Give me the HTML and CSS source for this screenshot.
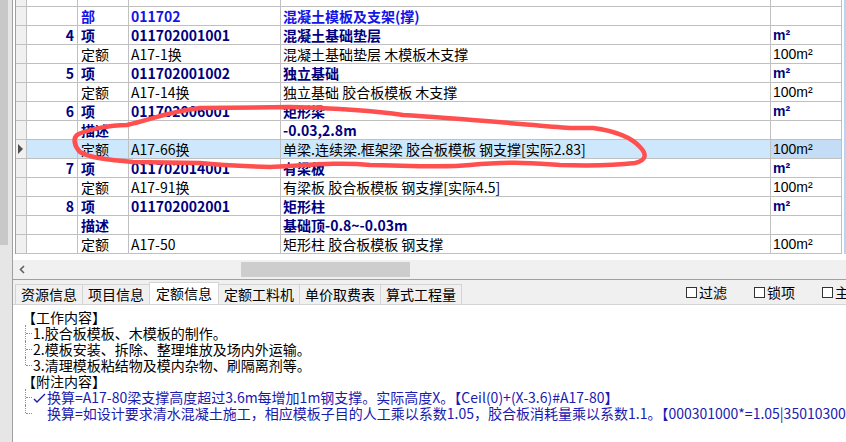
FILE: index.html
```html
<!DOCTYPE html>
<html lang="zh-CN">
	<head>
		<meta charset="UTF-8">
		<title>定额信息</title>
		<link rel="stylesheet" href="styles.css">
	</head>
	<body>
		<div class="app">
			<div class="side"><div class="thumb"></div></div>
			<div class="main">
				<div class="sheet">
					<div class="table">
						<div class="row cut"><div class="hd"></div><div></div><div></div><div></div><div></div><div></div></div>
						<div class="row bu"><div class="hd"></div><div class="num"></div><div>部</div><div>011702</div><div>混凝土模板及支架(撑)</div><div></div></div>
						<div class="row xm"><div class="hd"></div><div class="num">4</div><div>项</div><div>011702001001</div><div>混凝土基础垫层</div><div class="unit">m²</div></div>
						<div class="row de"><div class="hd"></div><div class="num"></div><div>定额</div><div>A17-1换</div><div>混凝土基础垫层 木模板木支撑</div><div class="unit">100m²</div></div>
						<div class="row xm"><div class="hd"></div><div class="num">5</div><div>项</div><div>011702001002</div><div>独立基础</div><div class="unit">m²</div></div>
						<div class="row de"><div class="hd"></div><div class="num"></div><div>定额</div><div>A17-14换</div><div>独立基础 胶合板模板 木支撑</div><div class="unit">100m²</div></div>
						<div class="row xm"><div class="hd"></div><div class="num">6</div><div>项</div><div>011702006001</div><div>矩形梁</div><div class="unit">m²</div></div>
						<div class="row xm"><div class="hd"></div><div class="num"></div><div>描述</div><div></div><div>-0.03,2.8m</div><div></div></div>
						<div class="row de sel"><div class="hd"><span class="arrow"></span></div><div class="num"></div><div>定额</div><div>A17-66换</div><div>单梁.连续梁.框架梁 胶合板模板 钢支撑[实际2.83]</div><div class="unit focus">100m²</div></div>
						<div class="row xm"><div class="hd"></div><div class="num">7</div><div>项</div><div>011702014001</div><div>有梁板</div><div class="unit">m²</div></div>
						<div class="row de"><div class="hd"></div><div class="num"></div><div>定额</div><div>A17-91换</div><div>有梁板 胶合板模板 钢支撑[实际4.5]</div><div class="unit">100m²</div></div>
						<div class="row xm"><div class="hd"></div><div class="num">8</div><div>项</div><div>011702002001</div><div>矩形柱</div><div class="unit">m²</div></div>
						<div class="row xm"><div class="hd"></div><div class="num"></div><div>描述</div><div></div><div>基础顶-0.8~-0.03m</div><div></div></div>
						<div class="row de"><div class="hd"></div><div class="num"></div><div>定额</div><div>A17-50</div><div>矩形柱 胶合板模板 钢支撑</div><div class="unit">100m²</div></div>
					</div>
					<div class="edge"></div>
				</div>
				<div class="hscroll">
					<svg class="left" width="17" height="17" viewBox="0 0 17 17"><path d="M9 5 L5.5 8.5 L9 12" fill="none" stroke="#606060" stroke-width="1.6"/></svg>
					<div class="hthumb"></div>
				</div>
				<div class="tabbar">
					<div class="tab">资源信息</div>
					<div class="tab">项目信息</div>
					<div class="tab on">定额信息</div>
					<div class="tab">定额工料机</div>
					<div class="tab">单价取费表</div>
					<div class="tab">算式工程量</div>
					<div class="checks">
						<label class="check"><span class="box"></span>过滤</label>
						<label class="check"><span class="box"></span>锁项</label>
						<label class="check"><span class="box"></span>主材</label>
					</div>
				</div>
				<div class="info">
					<p class="head">【工作内容】</p>
					<ul class="tree">
						<li>1.胶合板模板、木模板的制作。</li>
						<li>2.模板安装、拆除、整理堆放及场内外运输。</li>
						<li>3.清理模板粘结物及模内杂物、刷隔离剂等。</li>
					</ul>
					<p class="head">【附注内容】</p>
					<ul class="tree note">
						<li><svg class="tick" width="14" height="12" viewBox="0 0 14 12"><path d="M1 7 L4 10 L12 2" fill="none" stroke="#1a1ab0" stroke-width="1.4"/></svg>换算=A17-80梁支撑高度超过3.6m每增加1m钢支撑。实际高度X。【Ceil(0)+(X-3.6)#A17-80】</li>
						<li><span class="notick"></span>换算=如设计要求清水混凝土施工，相应模板子目的人工乘以系数1.05，胶合板消耗量乘以系数1.1。【000301000*=1.05|35010300*=1.1】</li>
					</ul>
				</div>
			</div>
		</div>
		<svg class="mark" width="846" height="442" viewBox="0 0 846 442">
			<path d="M77 135 C85 130 110 125 127 125 C150 120 170 111 200 108 L290 107 C330 108 370 110 403 115 C453 118 520 124 570 128 L593 128 C615 131 632 138 640 147 C648 155 645 161 635 163 C610 166 590 166 560 165 C530 163 510 161 470 165 C440 168 400 165 370 165 C340 162 310 165 270 167 C240 166 210 164 200 163 L133 162 C110 160 90 158 80 152 C74 146 73 138 77 135 Z" fill="none" stroke="#ff4f4f" stroke-width="4.5" stroke-linejoin="round"/>
		</svg>
	</body>
</html>
```

FILE: styles.css
```css
body {
	margin: 0;
	width: 846px;
	height: 442px;
	overflow: hidden;
	position: relative;
	background: #f0f0f0;
	font-family: "Noto Sans CJK SC", sans-serif;
	font-size: 14px;
	color: #000;
}
.app {
	display: flex;
	height: 442px;
}
.side {
	width: 12px;
	flex: none;
	background: #e6e6e6;
}
.side .thumb {
	width: 8px;
	height: 245px;
	background: #c8c8c8;
}
.main {
	flex: 1;
	min-width: 0;
	border-left: 1px solid #a0a0a0;
	display: flex;
	flex-direction: column;
}
.sheet {
	display: flex;
	background: #fff;
	padding: 0 0 6px 2px;
}
.table {
	width: 827px;
	flex: none;
	border-left: 1px solid #a0a0a0;
}
.row {
	display: grid;
	grid-template-columns: 11px 51px 51px 152px 490px 71px;
	height: 19px;
}
.row > div {
	box-sizing: border-box;
	border-right: 1px solid #c0c0c0;
	border-bottom: 1px solid #c0c0c0;
	line-height: 18px;
	padding-left: 2px;
	white-space: nowrap;
	overflow: hidden;
}
.row.cut {
	height: 7px;
}
.row > .hd {
	background: #f0f0f0;
	padding: 0;
}
.row > .num {
	text-align: right;
	padding: 0 3px 0 0;
}
.row > div:nth-child(3) {
	padding-left: 3px;
}
.unit {
	font-family: "Liberation Sans", sans-serif;
}
.bu {
	color: #1414e6;
	font-weight: bold;
}
.xm {
	color: #00007f;
	font-weight: bold;
}
.sel > div {
	background: #cde8fc;
}
.sel > .hd {
	background: #f0f0f0;
}
.sel > .focus {
	background: #c3ddf7;
}
.arrow {
	display: block;
	width: 0;
	height: 0;
	margin: 4px 0 0 2px;
	border-left: 5px solid #505050;
	border-top: 5px solid transparent;
	border-bottom: 5px solid transparent;
}
.edge {
	width: 2px;
	margin-left: 1px;
	background: #b8d6f0;
}
.hscroll {
	height: 19px;
	margin-left: 2px;
	display: flex;
	align-items: center;
	background: #f0f0f0;
}
.hscroll .left {
	flex: none;
}
.hthumb {
	width: 169px;
	height: 15px;
	margin-left: 209px;
	background: #cdcdcd;
}
.tabbar {
	height: 24px;
	display: flex;
	align-items: flex-end;
	padding-left: 2px;
	border-top: 1px solid #a0a0a0;
	border-bottom: 1px solid #d4d4d4;
	white-space: nowrap;
	overflow: hidden;
}
.tab {
	flex: none;
	height: 19px;
	line-height: 19px;
	padding: 0 5px;
	margin-right: -1px;
	border: 1px solid #d4d4d4;
	border-bottom: none;
	background: #f0f0f0;
	color: #000;
}
.tab.on {
	height: 22px;
	line-height: 21px;
	padding: 0 6px;
	margin-bottom: -1px;
	background: #fff;
	position: relative;
}
.checks {
	display: flex;
	gap: 27px;
	margin-left: 225px;
	align-self: center;
}
.check {
	display: flex;
	align-items: center;
	gap: 2px;
	line-height: 20px;
}
.box {
	width: 9px;
	height: 9px;
	border: 1px solid #333;
	background: #fff;
}
.info {
	flex: 1;
	background: #fff;
	padding: 4px 0 0 9px;
	line-height: 16px;
	white-space: nowrap;
	overflow: hidden;
}
.head {
	margin: 0;
}
.tree {
	list-style: none;
	margin: 0;
	padding: 0;
}
.tree li {
	position: relative;
	padding-left: 11px;
}
.tree li::before {
	content: "";
	position: absolute;
	left: 3px;
	top: 0;
	height: 100%;
	border-left: 1px dotted #909090;
}
.tree li:last-child::before {
	height: 8px;
}
.tree li::after {
	content: "";
	position: absolute;
	left: 4px;
	top: 8px;
	width: 6px;
	border-top: 1px dotted #909090;
}
.note li {
	color: #1a1ab0;
}
.tick {
	vertical-align: -1px;
}
.notick {
	display: inline-block;
	width: 14px;
}
.mark {
	position: absolute;
	left: 0;
	top: 0;
	pointer-events: none;
}
```
